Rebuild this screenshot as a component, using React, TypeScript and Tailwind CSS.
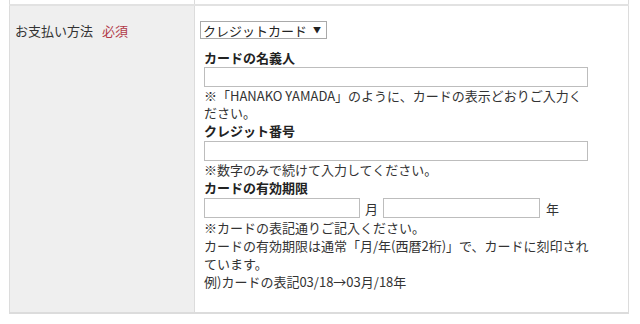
export default function App() {
  const font = { fontFamily: '"Noto Sans CJK JP", "Noto Sans", sans-serif' }

  return (
    <div className="h-[324px] w-[640px] bg-white text-[13px] text-[#333]" style={font}>
      <div className="ml-[9px] mr-[11px]">
        {/* previous row (cut off) */}
        <div className="flex h-[6px] border-b-[2px] border-[#e2e2e2]">
          <div className="w-[186px] border-x border-[#dcdcdc]" />
          <div className="flex-1 border-r border-[#dcdcdc]" />
        </div>

        {/* payment row */}
        <div className="flex h-[308px] border-b-[2px] border-[#dcdcdc]">
          <div className="flex w-[186px] shrink-0 border-x border-[#dcdcdc] bg-[#efefef] pl-[5px] pt-[16px]">
            <span className="leading-[17px]">お支払い方法</span>
            <span className="ml-[9px] leading-[17px] text-[#b23a48]">必須</span>
          </div>

          <div className="flex-1 border-r border-[#dcdcdc] pl-[5px] pt-[15px]">
            <div className="flex h-[18px] w-[127px] items-center whitespace-nowrap border border-[#a9a9a9] bg-white pl-[2px] text-[13px] leading-none text-[#222]">
              <span>クレジットカード</span>
              <span className="ml-[6px] text-[8px]">▼</span>
            </div>

            <div className="pl-[4px] leading-[17px]">
              <p className="mt-[10px] font-bold text-[#222]">カードの名義人</p>
              <div className="mt-[1px] h-[20px] w-[384px] border border-[#bdbdbd] bg-white" />
              <p>
                ※「HANAKO YAMADA」のように、カードの表示どおりご入力く
                <br />
                ださい。
              </p>

              <p className="mt-[1px] font-bold text-[#222]">クレジット番号</p>
              <div className="mt-[2px] h-[20px] w-[384px] border border-[#bdbdbd] bg-white" />
              <p>※数字のみで続けて入力してください。</p>

              <p className="mt-[1px] font-bold text-[#222]">カードの有効期限</p>
              <div className="mt-[2px] flex items-center">
                <div className="h-[20px] w-[156px] border border-[#bdbdbd] bg-white" />
                <span className="ml-[5px]">月</span>
                <div className="ml-[5px] h-[20px] w-[157px] border border-[#bdbdbd] bg-white" />
                <span className="ml-[6px]">年</span>
              </div>
              <div className="mt-[1px] leading-[18px]">
                <p>※カードの表記通りご記入ください。</p>
                <p>
                  カードの有効期限は通常「月/年(西暦2桁)」で、カードに刻印され
                  <br />
                  ています。
                </p>
                <p>例)カードの表記03/18→03月/18年</p>
              </div>
            </div>
          </div>
        </div>
      </div>
    </div>
  )
}
